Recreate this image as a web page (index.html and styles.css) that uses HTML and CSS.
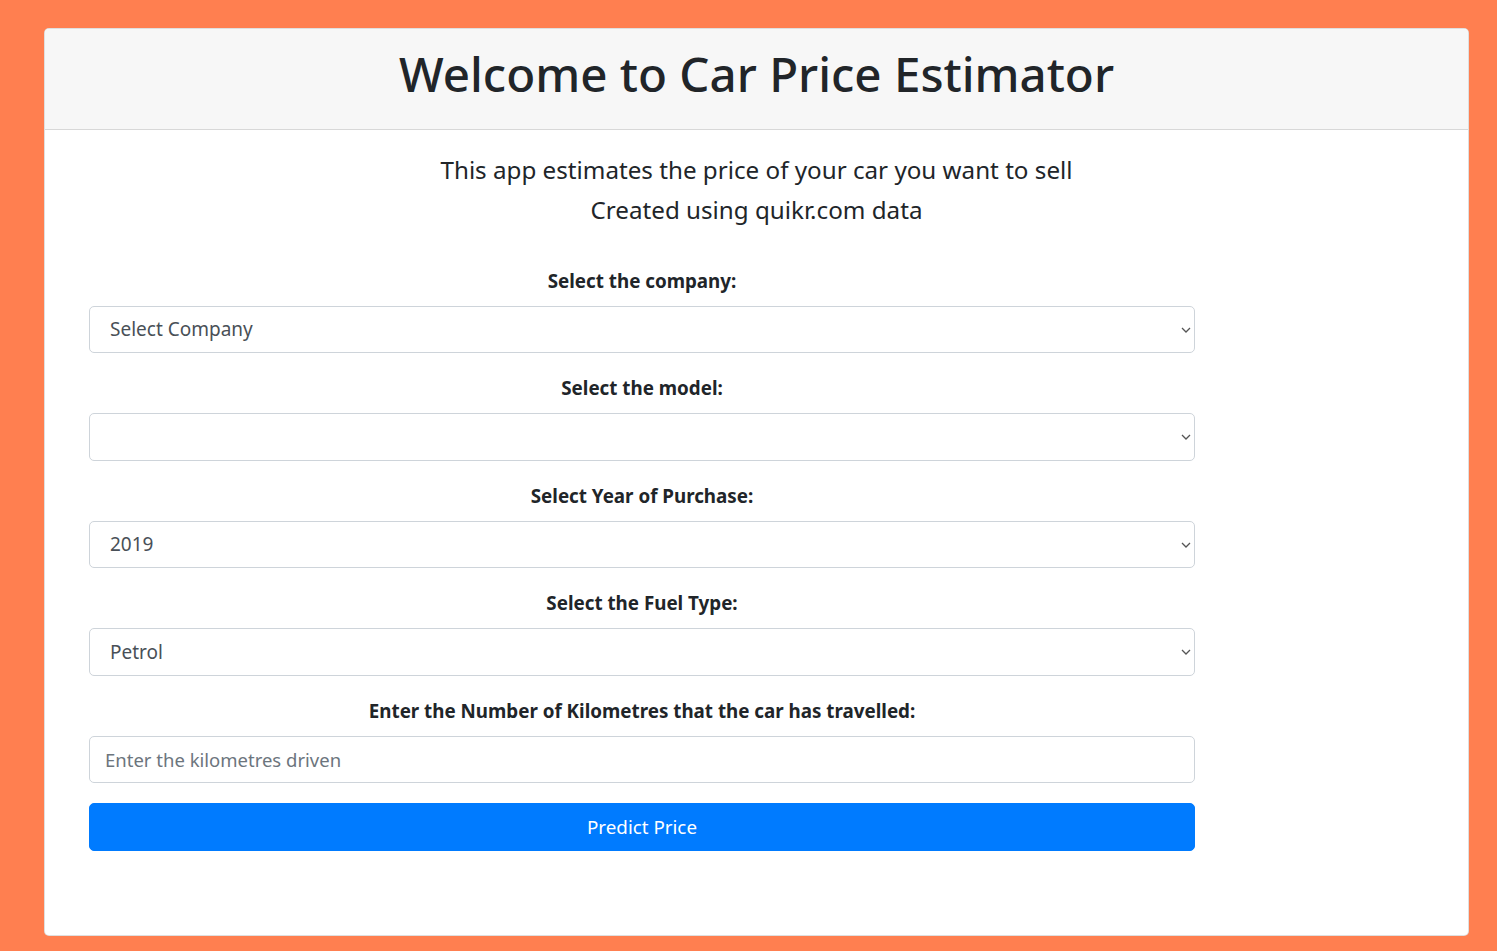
FILE: index.html
```html
<!DOCTYPE html>
<html>
<head>
<meta charset="utf-8">
<title>Car Price Estimator</title>
<link rel="stylesheet" href="styles.css">
</head>
<body>
<div class="card">
  <div class="card-header">
    <h1 class="title">Welcome to Car Price Estimator</h1>
  </div>
  <div class="card-body">
    <h5 class="intro">This app estimates the price of your car you want to sell</h5>
    <h5 class="intro">Created using quikr.com data</h5>
    <form class="form">
      <div class="form-group">
        <label class="label">Select the company:</label>
        <div class="select-wrap">
          <select class="control select"><option>Select Company</option></select>
          <svg class="chev" width="10" height="6" viewBox="0 0 10 6"><path d="M1 1 L5 5 L9 1" fill="none" stroke="#555" stroke-width="1.3"/></svg>
        </div>
      </div>
      <div class="form-group">
        <label class="label">Select the model:</label>
        <div class="select-wrap">
          <select class="control select"><option></option></select>
          <svg class="chev" width="10" height="6" viewBox="0 0 10 6"><path d="M1 1 L5 5 L9 1" fill="none" stroke="#555" stroke-width="1.3"/></svg>
        </div>
      </div>
      <div class="form-group">
        <label class="label">Select Year of Purchase:</label>
        <div class="select-wrap">
          <select class="control select"><option>2019</option></select>
          <svg class="chev" width="10" height="6" viewBox="0 0 10 6"><path d="M1 1 L5 5 L9 1" fill="none" stroke="#555" stroke-width="1.3"/></svg>
        </div>
      </div>
      <div class="form-group">
        <label class="label">Select the Fuel Type:</label>
        <div class="select-wrap">
          <select class="control select"><option>Petrol</option></select>
          <svg class="chev" width="10" height="6" viewBox="0 0 10 6"><path d="M1 1 L5 5 L9 1" fill="none" stroke="#555" stroke-width="1.3"/></svg>
        </div>
      </div>
      <div class="form-group">
        <label class="label">Enter the Number of Kilometres that the car has travelled:</label>
        <input class="control input" type="text" placeholder="Enter the kilometres driven">
      </div>
      <button class="btn" type="button">Predict Price</button>
    </form>
  </div>
</div>
</body>
</html>
```

FILE: styles.css
```css
html, body {
  margin: 0;
  padding: 0;
}
body {
  background: #ff7f50;
  font-family: "Noto Sans", "Open Sans", sans-serif;
  color: #212529;
  font-size: 20px;
  line-height: 1.5;
  height: 951px;
  box-sizing: border-box;
  padding: 28px 28px 15px 44px;
}
.card {
  background: #fff;
  border: 1px solid rgba(0,0,0,0.125);
  border-radius: 5px;
  height: 100%;
  box-sizing: border-box;
  overflow: hidden;
}
.card-header {
  background: #f7f7f7;
  border-bottom: 1px solid rgba(0,0,0,0.125);
  padding: 15px 25px;
  text-align: center;
}
.title {
  margin: 0 0 10px;
  font-size: 47.5px;
  font-weight: 500;
  line-height: 60px;
}
.card-body {
  padding: 25px 25px;
}
.intro {
  margin: 0 0 10px;
  font-size: 24.2px;
  font-weight: 400;
  line-height: 30px;
  text-align: center;
}
.form {
  width: 1106px;
  margin: 40.5px 0 0 19px;
  display: flex;
  flex-direction: column;
}
.form-group {
  display: flex;
  flex-direction: column;
  margin-bottom: 20px;
}
.label {
  font-weight: 700;
  font-size: 18.8px;
  text-align: center;
  margin-bottom: 10px;
  line-height: 30px;
}
.select-wrap {
  position: relative;
}
.control {
  width: 100%;
  height: 47.5px;
  box-sizing: border-box;
  border: 1px solid #ced4da;
  border-radius: 5px;
  background: #fff;
  font-family: inherit;
  color: #495057;
  margin: 0;
  outline: none;
}
.select {
  appearance: none;
  -webkit-appearance: none;
  padding: 0 20px;
  font-size: 19px;
}
.input {
  padding: 0 15px;
  font-size: 18.5px;
}
.input::placeholder {
  color: #6c757d;
}
.chev {
  position: absolute;
  right: 4px;
  top: 21px;
}
.btn {
  width: 100%;
  height: 47.5px;
  border: 1px solid #007bff;
  background: #007bff;
  color: #fff;
  border-radius: 5px;
  font-family: inherit;
  font-size: 18.8px;
  padding: 0;
}
```
